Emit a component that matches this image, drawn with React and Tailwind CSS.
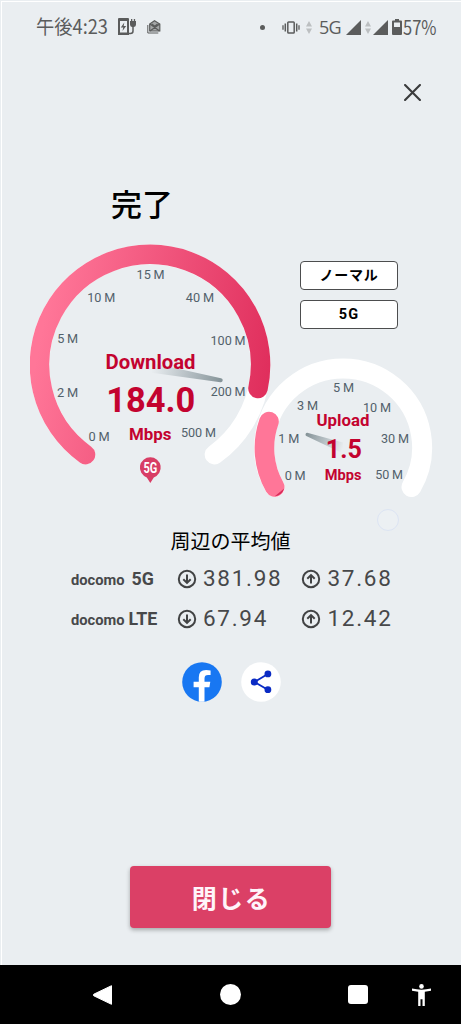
import React from "react";

const downloadTicks = [
  { text: "15 M", x: 136.6, y: 279, w: 28 },
  { text: "10 M", x: 87.2, y: 302.3, w: 28 },
  { text: "40 M", x: 185.8, y: 302.3, w: 28.2 },
  { text: "5 M", x: 57.2, y: 343, w: 21 },
  { text: "100 M", x: 210.5, y: 345, w: 35 },
  { text: "2 M", x: 56.9, y: 397.3, w: 21.2 },
  { text: "200 M", x: 210.7, y: 396, w: 34.8 },
  { text: "0 M", x: 88.5, y: 441, w: 21.2 },
  { text: "500 M", x: 180.9, y: 436.5, w: 35 },
];

const uploadTicks = [
  { text: "5 M", x: 333, y: 392.3, w: 21 },
  { text: "3 M", x: 297, y: 410, w: 21 },
  { text: "10 M", x: 363, y: 412, w: 28 },
  { text: "1 M", x: 278.3, y: 443, w: 21 },
  { text: "30 M", x: 381, y: 443.3, w: 28 },
  { text: "0 M", x: 284.7, y: 480, w: 21 },
  { text: "50 M", x: 375.2, y: 479, w: 27.8 },
];

const averages = [
  { net: "5G", gap: "ml-[7px]", down: "381.98", up: "37.68" },
  { net: "LTE", gap: "ml-[4px]", down: "67.94", up: "12.42" },
];

function GaugeText({ text, x, y, w, className }) {
  return (
    <text x={x} y={y} textLength={w} lengthAdjust="spacingAndGlyphs" className={className}>
      {text}
    </text>
  );
}

function Ticks({ items }) {
  return items.map((t) => (
    <GaugeText key={t.text} {...t} className="fill-[#52616b] text-[13.600px] [word-spacing:-0.400px]" />
  ));
}

function StatusBar() {
  return (
    <div className="flex h-[50px] items-center justify-between pl-[34px] pr-[20px] text-[#5b5c5c]">
      <div className="flex items-center">
        <svg className="h-[36px] w-[76px]" viewBox="0 0 76 36">
          <text x="0" y="25" textLength="72" lengthAdjust="spacingAndGlyphs" className="fill-[#5b5c5c] text-[19.500px] font-['Noto_Sans_CJK_JP',sans-serif]">
            午後4:23
          </text>
        </svg>
        {/* Charging station */}
        <svg className="ml-[6px] h-[18px] w-[19px]" viewBox="0 0 19 18">
          <path d="M1 0h9a1 1 0 0 1 1 1v16H0V1a1 1 0 0 1 1-1zM2 3v11.500h7V3z" fill="currentColor" fillRule="evenodd" />
          <path d="M6.300 4.500 2.800 9.400h2.400l-.7 3.700 3.700-5.100H5.700z" fill="currentColor" />
          <path d="M11 15.500h1.500q2.500 0 2.500-2.500V7" fill="none" stroke="currentColor" strokeWidth="1.500" />
          <path d="M12 3h6v3.500q0 2-2 2.500h-2q-2-.5-2-2.500zM13 1h1.300v2H13zM15.800 1h1.300v2h-1.300z" fill="currentColor" />
        </svg>
        {/* Mail stack */}
        <svg className="ml-[10px] h-[14px] w-[14px]" viewBox="0 0 14 14" fill="none" stroke="currentColor">
          <path d="M.8 5v8h10.500" strokeWidth="1" />
          <path d="M2.700 4 7.500.8 12.800 4v7H2.700z" strokeWidth="1.200" fill="#a5a7a8" />
          <path d="m3 4 9.500 7M12.700 4 3 11M5 4l2.700 2.500L10.500 4" strokeWidth="1.300" />
        </svg>
      </div>
      <div className="flex items-center">
        <span className="h-[5px] w-[5px] rounded-full bg-[#5b5c5c]" />
        {/* Vibrate */}
        <svg className="ml-[17px] h-[13px] w-[18px]" viewBox="0 0 18 13" fill="none" stroke="currentColor">
          <rect x="5.800" y="1" width="6.400" height="11" rx="0.800" strokeWidth="1.500" />
          <path d="M3.300 2.500v8M14.700 2.500v8" strokeWidth="1.500" />
          <path d="M1 4.300v4.400M17 4.300v4.400" strokeWidth="1.300" />
        </svg>
        <DataArrows className="ml-[6px] h-[13px] w-[6px]" />
        <span className="ml-[7px] text-[18px] leading-none tracking-[-0.7px] font-['Open_Sans',sans-serif] font-medium">5G</span>
        <Signal className="ml-[5px] h-[15px] w-[15px]" />
        <DataArrows className="ml-[4px] h-[13px] w-[6px]" />
        <Signal className="ml-[2px] h-[15px] w-[15px]" />
        <svg className="ml-[4px] h-[16px] w-[10px]" viewBox="0 0 10 16" fill="currentColor">
          <path fillRule="evenodd" d="M3 0h4v1.500h2a1 1 0 0 1 1 1V15a1 1 0 0 1-1 1H1a1 1 0 0 1-1-1V2.500a1 1 0 0 1 1-1h2zM2 3.500V8h6V3.500z" />
        </svg>
        <svg className="ml-[1px] h-[38px] w-[38px]" viewBox="0 0 38 38">
          <text x="0" y="26.500" textLength="33.500" lengthAdjust="spacingAndGlyphs" className="fill-[#5b5c5c] text-[20px] font-['Noto_Sans_CJK_JP',sans-serif]">
            57%
          </text>
        </svg>
      </div>
    </div>
  );
}

function DataArrows({ className }) {
  return (
    <svg className={className} viewBox="0 0 6 13" fill="#bcbfc1">
      <path d="M3 0 6 5.500H0zM3 13 0 7.500h6z" />
    </svg>
  );
}

function Signal({ className }) {
  return (
    <svg className={className} viewBox="0 0 15 15" fill="currentColor">
      <path d="M15 0v15H0z" />
    </svg>
  );
}

function DownloadGauge() {
  return (
    <svg className="ml-[30px] h-[245px] w-[242px] shrink-0" viewBox="30 244 242 245">
      <defs>
        <linearGradient id="dl" gradientUnits="userSpaceOnUse" x1="40" y1="340" x2="265" y2="385">
          <stop offset="0" stopColor="#ff7698" />
          <stop offset="1" stopColor="#e02f5d" />
        </linearGradient>
        <linearGradient id="dlNeedle" gradientUnits="userSpaceOnUse" x1="152" y1="367" x2="221" y2="380">
          <stop offset="0" stopColor="#a5b0b5" stopOpacity="0" />
          <stop offset="0.550" stopColor="#a5b0b5" stopOpacity="0.800" />
          <stop offset="1" stopColor="#869499" />
        </linearGradient>
      </defs>
      <path d="M85.500 454.600A110.500 110.500 0 1 1 214.500 454.600" fill="none" stroke="#fff" strokeWidth="19.600" strokeLinecap="round" />
      <path d="M85.500 454.600A110.500 110.500 0 1 1 258 388.500" fill="none" stroke="url(#dl)" strokeWidth="19.600" strokeLinecap="round" />
      <path d="M150 362.500 221 378.300a2 2 0 0 1-.6 4L150 372.500z" fill="url(#dlNeedle)" />
      <Ticks items={downloadTicks} />
      <g className="fill-[#c3032f] font-bold">
        <GaugeText text="Download" x={105.500} y={369.300} w={90} className="text-[20px]" />
        <GaugeText text="184.0" x={106.300} y={411.800} w={89} className="text-[35px]" />
        <GaugeText text="Mbps" x={129} y={440} w={42.500} className="text-[17px]" />
      </g>
      {/* 5G map pin */}
      <path d="M150.300 457.200a10.400 10.400 0 0 1 3.500 20.200L150.300 483l-3.500-5.600a10.400 10.400 0 0 1 3.500-20.200z" fill="#d83d65" />
      <text x="143.400" y="472.700" textLength="13.800" lengthAdjust="spacingAndGlyphs" className="fill-white text-[14.500px] font-bold">
        5G
      </text>
    </svg>
  );
}

function UploadGauge() {
  return (
    <svg className="mt-[28px] h-[145px] w-[182px]" viewBox="252 357 182 145">
      <defs>
        <linearGradient id="ulNeedle" gradientUnits="userSpaceOnUse" x1="343" y1="448" x2="307" y2="434">
          <stop offset="0" stopColor="#a5b0b5" stopOpacity="0" />
          <stop offset="0.550" stopColor="#a5b0b5" stopOpacity="0.800" />
          <stop offset="1" stopColor="#869499" />
        </linearGradient>
      </defs>
      <path d="M274.700 487A79 79 0 1 1 411.500 487" fill="none" stroke="#fff" strokeWidth="20" strokeLinecap="round" />
      <path d="M274.700 487A79 79 0 0 1 269 421.500" fill="none" stroke="#ff7698" strokeWidth="19.600" strokeLinecap="round" />
      <path d="M284.200 488.500Q282 495.500 274.500 496.400Z" fill="#d82c5a" />
      <path d="M343 442.500 307.300 432.800a1.800 1.800 0 0 0-1 3.300L343 453.500z" fill="url(#ulNeedle)" />
      <Ticks items={uploadTicks} />
      <g className="fill-[#c3032f] font-bold">
        <GaugeText text="Upload" x={316.500} y={425.700} w={53} className="text-[16.500px]" />
        <GaugeText text="1.5" x={325.800} y={457.800} w={36} className="text-[26px]" />
        <GaugeText text="Mbps" x={324.700} y={480} w={36.700} className="text-[14.500px]" />
      </g>
    </svg>
  );
}

function ArrowCircle({ up, className }) {
  return (
    <svg className={className} viewBox="0 0 20 20" fill="none" stroke="#424344" strokeWidth="2">
      <circle cx="10" cy="10" r="8.200" />
      {up ? <path d="M10 14.500V6M6.300 9.800 10 6.100l3.700 3.700" /> : <path d="M10 5.500V14M6.300 10.200l3.700 3.700 3.700-3.700" />}
    </svg>
  );
}

export default function App() {
  return (
    <div className="flex h-[1024px] w-[461px] flex-col overflow-hidden bg-[#eaeef1] font-['Roboto','Noto_Sans_CJK_JP',sans-serif]">
      <main className="ml-px mt-px flex h-[964px] flex-col border-l border-t border-white">
        <StatusBar />

        <button className="mr-[40px] mt-[32px] self-end" aria-label="閉じる">
          <svg className="h-[17px] w-[17px]" viewBox="0 0 16 16" stroke="#3a3b3c" strokeWidth="2" strokeLinecap="round">
            <path d="m1 1 14 14M15 1 1 15" />
          </svg>
        </button>

        <h1 className="ml-[109px] mt-[82px] text-[31px] font-medium leading-[40px] text-black font-['Noto_Sans_CJK_JP',sans-serif]">完了</h1>

        {/* Gauges */}
        <section className="-ml-[2px] mt-[21px] flex h-[265px]">
          <DownloadGauge />
          <div className="relative -ml-[20px] pt-[17px]">
            <div className="ml-[48px] flex w-[98px] flex-col gap-[10px] text-center text-[14px] font-bold text-black">
              <button className="h-[29px] rounded-[4px] border border-[#4c4d4e] bg-white leading-[27px] tracking-[0.8px]">ノーマル</button>
              <button className="h-[29px] rounded-[4px] border border-[#4c4d4e] bg-white text-[14.500px] leading-[27px] tracking-[1.200px]">5G</button>
            </div>
            <UploadGauge />
            <span className="absolute left-[125px] top-[265px] h-[22px] w-[22px] rounded-full border border-[#dce4f3] bg-[#ecf0f3]" />
          </div>
        </section>

        {/* Area averages */}
        <h2 className="-ml-[2px] mt-[17px] text-center text-[20px] leading-[30px] text-black font-['Noto_Sans_CJK_JP',sans-serif]">
          周辺の平均値
        </h2>
        <div className="ml-[69px] mt-[3px] text-[#47484a]">
          {averages.map((row) => (
            <div key={row.net} className="flex h-[40px] items-center">
              <div className="flex w-[106px] items-baseline font-bold">
                <span className="text-[14.700px]">docomo</span>
                <span className={`${row.gap} text-[17.800px]`}>{row.net}</span>
              </div>
              <ArrowCircle className="h-[20px] w-[20px]" />
              <span className="ml-[6px] w-[98px] text-[22.500px] tracking-[1.700px]">{row.down}</span>
              <ArrowCircle up className="h-[20px] w-[20px]" />
              <span className="ml-[6.500px] text-[22.500px] tracking-[1.700px]">{row.up}</span>
            </div>
          ))}
        </div>

        {/* Share */}
        <div className="-ml-[1px] mt-[23px] flex justify-center gap-[19px]">
          <svg className="h-[40px] w-[40px]" viewBox="0 0 40 40">
            <circle cx="20" cy="20" r="19.800" fill="#1877f2" />
            <path d="M16.800 39.500V25.300h-5.200v-5.500h5.200v-4.500q0-7.300 7.300-7.300 2.500 0 4.500.4v4.700h-2.600q-3.500 0-3.500 3.400v3.300h5.800l-.9 5.500h-4.900v14.200q-2.900.5-5.700 0z" fill="#fff" />
          </svg>
          <svg className="h-[40px] w-[40px]" viewBox="0 0 40 40">
            <circle cx="20" cy="20" r="19.800" fill="#fff" />
            <path d="M26.800 12 13.500 20l13.300 7.700" fill="none" stroke="#0a2bc4" strokeWidth="1.900" />
            <g fill="#0a2bc4">
              <circle cx="26.900" cy="11.900" r="3.400" />
              <circle cx="13.300" cy="20" r="3.500" />
              <circle cx="26.900" cy="27.700" r="3.400" />
            </g>
          </svg>
        </div>

        <button className="-ml-[2px] mt-[164px] h-[62px] w-[201px] self-center rounded-[4px] bg-[#db4066] pl-[2px] text-center text-[25px] font-bold leading-[60px] tracking-[1.500px] text-[#fff4fa] shadow-[0_2px_4px_rgba(0,0,0,0.3)] font-['Noto_Sans_CJK_JP',sans-serif]">
          閉じる
        </button>
      </main>

      <nav className="flex h-[59px] items-center bg-black">
        <svg className="ml-[93px] h-[20px] w-[20px]" viewBox="0 0 20 20" fill="#fff">
          <path d="M18.500.7V19.300L.8 10.800q-1-.8 0-1.600z" stroke="#fff" strokeLinejoin="round" />
        </svg>
        <span className="ml-[107px] h-[21px] w-[21px] rounded-full bg-white" />
        <span className="ml-[107px] h-[19px] w-[20px] rounded-[3px] bg-white" />
        {/* Accessibility */}
        <svg className="ml-[44px] h-[22px] w-[19px]" viewBox="0 0 19 22" fill="#fff">
          <circle cx="9.500" cy="2.400" r="2.300" />
          <path d="M0 4.600q9.500 2.200 19 0v2.200q-3 .6-6.200.9V22h-2.300v-6.800h-2V22H6.200V7.700Q3 7.400 0 6.800z" />
        </svg>
      </nav>
    </div>
  );
}
